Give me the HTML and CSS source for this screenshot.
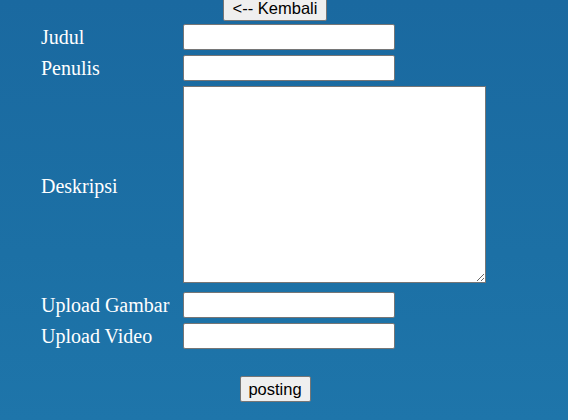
FILE: index.html
```html
<!DOCTYPE html>
<html>
<head>
<meta charset="utf-8">
<link rel="stylesheet" href="styles.css">
</head>
<body>
<div class="page">
  <div class="top"><button class="btn btn-back" type="button">&lt;-- Kembali</button></div>
  <form class="form">
    <label class="lbl">Judul</label>
    <input class="field" type="text">
    <label class="lbl">Penulis</label>
    <input class="field" type="text">
    <label class="lbl">Deskripsi</label>
    <textarea class="area"></textarea>
    <label class="lbl">Upload Gambar</label>
    <input class="field" type="text">
    <label class="lbl">Upload Video</label>
    <input class="field" type="text">
  </form>
  <div class="bottom"><button class="btn btn-post" type="button">posting</button></div>
</div>
</body>
</html>
```
FILE: styles.css
```css
html, body {
  margin: 0;
  padding: 0;
}
body {
  width: 568px;
  height: 420px;
  overflow: hidden;
  background: linear-gradient(180deg, #1a69a0 0%, #1c70a5 60%, #1e75aa 100%);
  font-family: "Liberation Serif", "Times New Roman", serif;
  font-size: 20px;
  color: #ffffff;
}
.page {
  width: 550px;
}
.top, .bottom {
  display: flex;
  justify-content: center;
}
.btn {
  box-sizing: border-box;
  height: 26px;
  margin: 0;
  padding: 0;
  white-space: nowrap;
  text-align: center;
  font-family: "Liberation Sans", Arial, sans-serif;
  font-size: 16.5px;
  line-height: 18px;
  color: #000;
  background: #efefef;
  border: 1px solid #767676;
  border-radius: 2px;
}
.btn-back {
  margin-top: -5px;
  width: 104px;
}
.btn-post {
  width: 71px;
}
.bottom {
  margin-top: 27px;
}
.form {
  margin: 3px 0 0 0;
  padding-left: 41px;
  display: grid;
  grid-template-columns: 142px auto;
  row-gap: 5px;
  align-items: center;
  justify-items: start;
}
.lbl {
  line-height: 23px;
  white-space: nowrap;
}
.field {
  box-sizing: border-box;
  width: 212px;
  height: 26px;
  margin: 0;
  padding: 1px 2px;
  border: 1px solid #767676;
  border-radius: 2px;
  background: #fff;
  font-size: 16px;
}
.area {
  box-sizing: border-box;
  width: 303px;
  height: 197px;
  margin: 0 0 4px 0;
  padding: 2px;
  border: 1px solid #767676;
  border-radius: 0;
  background: #fff;
  display: block;
}
```
